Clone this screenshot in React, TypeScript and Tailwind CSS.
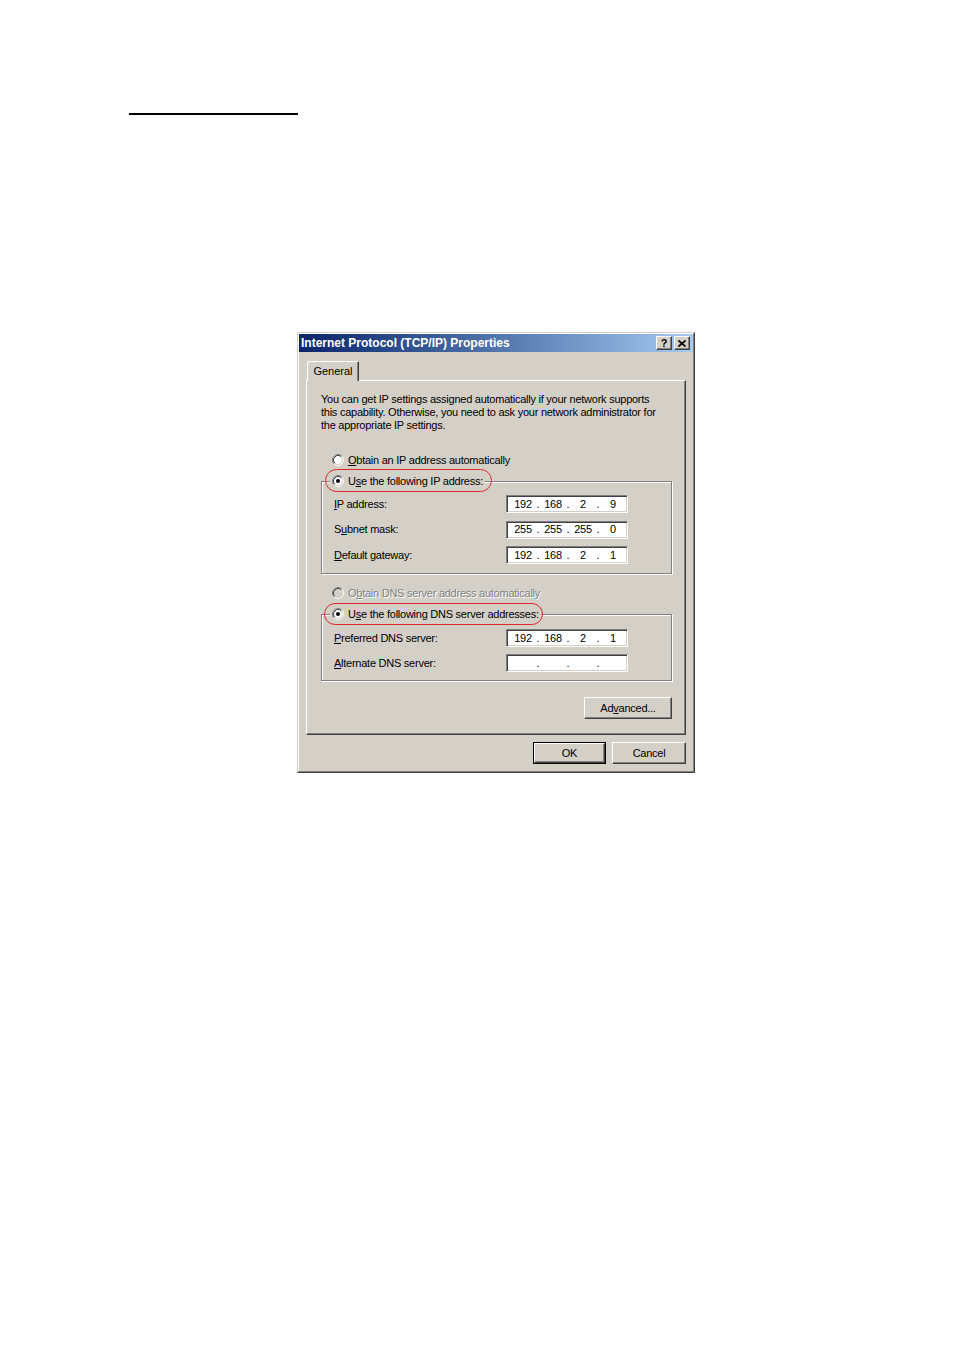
import type { ReactNode } from 'react'

function Radio({ checked, disabled }: { checked?: boolean; disabled?: boolean }) {
  return (
    <svg width="12" height="12" viewBox="0 0 12 12" className="shrink-0">
      <circle cx="6" cy="6" r="4.5" fill={disabled ? '#d4d0c8' : '#ffffff'} />
      <path d="M9.89 2.11 A5.5 5.5 0 0 0 2.11 9.89" stroke="#808080" fill="none" />
      <path d="M2.11 9.89 A5.5 5.5 0 0 0 9.89 2.11" stroke="#ffffff" fill="none" />
      <path d="M9.18 2.82 A4.5 4.5 0 0 0 2.82 9.18" stroke="#404040" fill="none" />
      <path d="M2.82 9.18 A4.5 4.5 0 0 0 9.18 2.82" stroke="#d4d0c8" fill="none" />
      {checked && <circle cx="6" cy="6" r="2" fill="#000000" />}
    </svg>
  )
}

function U({ children }: { children: ReactNode }) {
  return <span className="underline underline-offset-[1px]">{children}</span>
}

function IpField({ value }: { value: string[] }) {
  const parts = value.length ? value : ['', '', '', '']
  return (
    <div className="w-[122px] h-[18px] bg-white border border-t-[#808080] border-l-[#808080] border-r-white border-b-white shadow-[inset_1px_1px_0_#404040,inset_-1px_-1px_0_#d4d0c8] flex items-center pl-[4px]">
      {parts.map((p, i) => (
        <div key={i} className="flex items-center">
          <span className="w-[24px] text-center">{p}</span>
          {i < 3 && <span className="w-[6px] text-center">.</span>}
        </div>
      ))}
    </div>
  )
}

function Row({ label, value }: { label: ReactNode; value: string[] }) {
  return (
    <div className="h-[18px] flex items-center">
      <div className="w-[184px] pl-[12px]">{label}</div>
      <IpField value={value} />
    </div>
  )
}

function Button({ children, isDefault, className }: { children: ReactNode; isDefault?: boolean; className: string }) {
  const inner = (
    <div className="w-full h-full flex items-center justify-center bg-[#d4d0c8] border border-t-white border-l-white border-r-[#404040] border-b-[#404040] shadow-[inset_-1px_-1px_0_#808080]">
      {children}
    </div>
  )
  return isDefault ? (
    <div className={`${className} border border-black`}>{inner}</div>
  ) : (
    <div className={className}>{inner}</div>
  )
}

export default function App() {
  return (
    <div className="min-h-[1350px] bg-white text-black text-[11px] font-['Liberation_Sans',Arial,sans-serif] tracking-[-0.25px]">
      <div className="pt-[113px] pl-[129px]">
        <div className="w-[169px] h-[2px] bg-black" />
      </div>

      <div className="ml-[297px] mt-[217px] w-[398px] h-[441px] border border-t-[#d4d0c8] border-l-[#d4d0c8] border-r-[#404040] border-b-[#404040]">
        <div className="h-full bg-[#d4d0c8] border border-t-white border-l-white border-r-[#808080] border-b-[#808080]">
          {/* title bar */}
          <div className="h-[18px] bg-linear-to-r from-[#0a246a] to-[#a6caf0] flex items-center justify-between pl-[2px] pr-[3px]">
            <span className="text-white font-bold text-[12px] tracking-normal">Internet Protocol (TCP/IP) Properties</span>
            <div className="flex gap-[2px]">
              <div className="w-[16px] h-[14px] bg-[#d4d0c8] border border-t-white border-l-white border-r-[#404040] border-b-[#404040] shadow-[inset_-1px_-1px_0_#808080] flex items-center justify-center font-bold text-[11px] leading-none">
                ?
              </div>
              <div className="w-[16px] h-[14px] bg-[#d4d0c8] border border-t-white border-l-white border-r-[#404040] border-b-[#404040] shadow-[inset_-1px_-1px_0_#808080] flex items-center justify-center">
                <svg width="8" height="7" viewBox="0 0 8 7">
                  <path d="M0.5 0.5 L7.5 6.5 M7.5 0.5 L0.5 6.5" stroke="#000" strokeWidth="1.7" />
                </svg>
              </div>
            </div>
          </div>

          <div className="px-[7px] pt-[9px]">
            {/* tab */}
            <div className="relative z-10 -mb-px ml-px w-[52px] h-[20px] bg-[#d4d0c8] border-t border-l border-r border-t-white border-l-white border-r-[#404040] rounded-tl-[3px] shadow-[inset_-1px_0_0_#808080] flex items-center justify-center tracking-normal">
              General
            </div>

            {/* panel */}
            <div className="w-[380px] h-[355px] border border-t-white border-l-white border-r-[#404040] border-b-[#404040] shadow-[inset_-1px_-1px_0_#808080] pl-[14px] pt-[12px]">
              <p className="leading-[13px] tracking-[-0.25px]">
                You can get IP settings assigned automatically if your network supports
                <br />
                this capability. Otherwise, you need to ask your network administrator for
                <br />
                the appropriate IP settings.
              </p>

              <div className="mt-[21px] pl-[11px] h-[14px] flex items-center gap-[4px]">
                <Radio />
                <span>
                  <U>O</U>btain an IP address automatically
                </span>
              </div>

              <fieldset className="mt-[7px] w-[351px] border border-[#808080] shadow-[inset_1px_1px_0_#ffffff,1px_1px_0_#ffffff] pb-[9px]">
                <legend className="relative ml-[8px] px-[2px] h-[14px] bg-[#d4d0c8]">
                  <div className="h-[14px] flex items-center gap-[4px]">
                    <Radio checked />
                    <span>
                      U<U>s</U>e the following IP address:
                    </span>
                  </div>
                  <div className="absolute left-[-5px] top-[-5px] w-[167px] h-[23px] rounded-[12px] border border-[#dc2a2e]" />
                </legend>
                <div className="pt-[7px] flex flex-col gap-[7.5px]">
                  <Row label={<><U>I</U>P address:</>} value={['192', '168', '2', '9']} />
                  <Row label={<>S<U>u</U>bnet mask:</>} value={['255', '255', '255', '0']} />
                  <Row label={<><U>D</U>efault gateway:</>} value={['192', '168', '2', '1']} />
                </div>
              </fieldset>

              <div className="mt-[12px] pl-[11px] h-[14px] flex items-center gap-[4px]">
                <Radio disabled />
                <span className="text-[#808080] [text-shadow:1px_1px_0_#ffffff]">
                  O<U>b</U>tain DNS server address automatically
                </span>
              </div>

              <fieldset className="mt-[7px] w-[351px] border border-[#808080] shadow-[inset_1px_1px_0_#ffffff,1px_1px_0_#ffffff] pb-[8px]">
                <legend className="relative ml-[8px] px-[2px] h-[14px] bg-[#d4d0c8]">
                  <div className="h-[14px] flex items-center gap-[4px]">
                    <Radio checked />
                    <span>
                      U<U>s</U>e the following DNS server addresses:
                    </span>
                  </div>
                  <div className="absolute left-[-6px] top-[-4px] w-[219px] h-[22px] rounded-[12px] border border-[#dc2a2e]" />
                </legend>
                <div className="pt-[8px] flex flex-col gap-[7px]">
                  <Row label={<><U>P</U>referred DNS server:</>} value={['192', '168', '2', '1']} />
                  <Row label={<><U>A</U>lternate DNS server:</>} value={[]} />
                </div>
              </fieldset>

              <div className="w-[351px] mt-[16px] flex justify-end">
                <Button className="w-[88px] h-[22px]">
                  Ad<U>v</U>anced...
                </Button>
              </div>
            </div>

            <div className="w-[380px] mt-[7px] flex justify-end gap-[6px]">
              <Button isDefault className="w-[73px] h-[22px]">
                OK
              </Button>
              <Button className="w-[74px] h-[22px]">Cancel</Button>
            </div>
          </div>
        </div>
      </div>
    </div>
  )
}
